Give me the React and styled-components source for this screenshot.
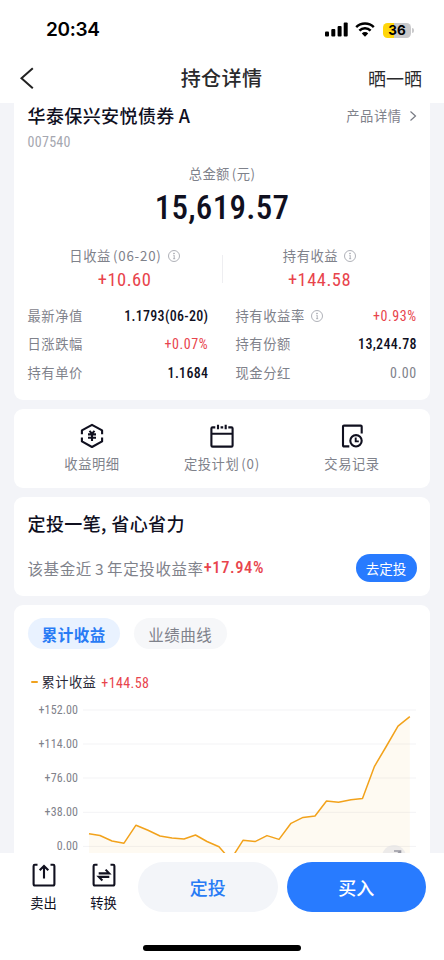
import React from "react"
import styled, { createGlobalStyle, css } from "styled-components"

// Data:
const leftStats = [
    { label: "最新净值", value: "1.1793(06-20)" },
    { label: "日涨跌幅", value: "+0.07%", tone: "up" },
    { label: "持有单价", value: "1.1684" },
]

const rightStats = [
    { label: "持有收益率", value: "+0.93%", tone: "up", info: true },
    { label: "持有份额", value: "13,244.78" },
    { label: "现金分红", value: "0.00", tone: "muted" },
]

const axisLabels = ["+152.00", "+114.00", "+76.00", "+38.00", "0.00"]

const profit = [
    [6, 133.8], [17, 135.5], [29, 141], [41, 143.2], [53, 125.2], [65, 130.3], [77, 136],
    [89, 138], [101, 139], [112.5, 135], [124, 141.5], [136, 146.7], [147.5, 160],
    [160, 140.3], [172, 141.6], [184, 135.6], [196, 139.4], [208, 123.3], [220, 117.4],
    [232, 116], [243.5, 101], [255.5, 102.3], [268, 99.8], [279.5, 98.4], [291.5, 66.3],
    [303.5, 46], [315, 26.2], [326.8, 16.6],
]

const InfoIcon = () => (
    <svg width="12" height="12" viewBox="0 0 12 12" fill="none" stroke="#9a9da6" strokeWidth="0.8">
        <circle cx="6" cy="6" r="5.5" />
        <path d="M5.4 5.2H6.2V8.6M5.2 8.7H7.2" />
        <circle cx="6" cy="3.3" r="0.4" fill="#9a9da6" />
    </svg>
)

const StatusIcons = () => (
    <svg width="88" height="18" viewBox="0 0 88 18">
        <rect x="0" y="10.5" width="4" height="5" rx="1" />
        <rect x="6.3" y="8" width="4" height="7.5" rx="1" />
        <rect x="12.6" y="5" width="4" height="10.5" rx="1" />
        <rect x="18.7" y="1.5" width="4" height="14" rx="1" />
        <g fill="none" stroke="#000" strokeWidth="2.5">
            <path d="M31.2 6.2a12.4 12.4 0 0 1 17.6 0" />
            <path d="M34.4 9.7a7.8 7.8 0 0 1 11.2 0" />
        </g>
        <path d="M40 15.7l-3.2-3.3a4.6 4.6 0 0 1 6.4 0z" />
    </svg>
)

const YenIcon = () => (
    <svg width="26" height="26" viewBox="0 0 26 26" fill="none" stroke="#10101f" strokeWidth="2.1">
        <path d="M2.9 11.3V7.4L13 1.9 23.1 7.4V11.3M2.9 14.4V18.4L13 24 23.1 18.4V14.4" strokeLinejoin="round" />
        <path d="M10.5 7.9L13 10.6 15.5 7.9M9 11.4H17M9 14.7H17M13 10.6V17.9" />
    </svg>
)

const CalendarIcon = () => (
    <svg width="26" height="26" viewBox="0 0 26 26" fill="none" stroke="#10101f" strokeWidth="2.1">
        <path d="M6.3 4.4H3.6Q2.4 4.4 2.4 5.6V22.4Q2.4 23.6 3.6 23.6H22.4Q23.6 23.6 23.6 22.4V5.6Q23.6 4.4 22.4 4.4H19.3M11.6 4.4H14.2M2.4 10.8H23.6" />
        <path d="M9 1.8V6.2M16.7 1.8V6.2" />
    </svg>
)

const RecordIcon = () => (
    <svg width="26" height="26" viewBox="0 0 26 26" fill="none" stroke="#10101f" strokeWidth="2.1">
        <path d="M10.3 23.4H5Q4 23.4 4 22.4V3.6Q4 2.6 5 2.6H21.7Q22.7 2.6 22.7 3.6V10.5" />
        <circle cx="17" cy="17.8" r="5.7" />
        <path d="M16.7 14.6V18.4H19.8" strokeWidth="1.9" />
    </svg>
)

const SellIcon = () => (
    <svg width="26" height="26" viewBox="0 0 26 26" fill="none" stroke="#10101f" strokeWidth="2.1">
        <path d="M6.5 2.7H3.8Q2.6 2.7 2.6 3.9V22Q2.6 23.5 4 23.5H22Q23.4 23.5 23.4 22V3.9Q23.4 2.7 22.2 2.7H19.5" />
        <path d="M13 16.5V4.2M8.7 8.2L13 3.9 17.3 8.2" />
    </svg>
)

const SwapIcon = () => (
    <svg width="26" height="26" viewBox="0 0 26 26" fill="none" stroke="#10101f" strokeWidth="2.1">
        <path d="M6.5 2.7H3.8Q2.6 2.7 2.6 3.9V22Q2.6 23.5 4 23.5H22Q23.4 23.5 23.4 22V3.9Q23.4 2.7 22.2 2.7H19.5" />
        <path d="M7.7 11.4H18.2L14.6 7.6M18.3 14.9H7.8L11.4 18.6" />
    </svg>
)

const StatColumn = ({ items }) => (
    <Column>
        {items.map((item) => (
            <StatRow key={item.label}>
                <Label>
                    {item.label}
                    {item.info && <InfoIcon />}
                </Label>
                <StatValue $tone={item.tone}>{item.value}</StatValue>
            </StatRow>
        ))}
    </Column>
)

const ProfitChart = () => {
    const line = profit.map((point) => point.join(",")).join(" ")
    return (
        <svg width="333" height="153" viewBox="0 0 333 153" fill="none">
            {[10, 44, 78, 112.3, 146.4].map((y) => (
                <path key={y} d={`M0 ${y}H333`} stroke="#f3f3f5" />
            ))}
            <polygon points={`6,170 ${line} 326.8,170`} fill="#f5a31a" fillOpacity="0.06" />
            <polyline points={line} stroke="#f2a21b" strokeWidth="1.5" strokeLinejoin="round" />
        </svg>
    )
}

const App = () => {
    return (
        <>
            <GlobalStyle />
            <Screen>
                <StatusBar>
                    <Clock>20:34</Clock>
                    <StatusRight>
                        <StatusIcons />
                        <Battery>36</Battery>
                    </StatusRight>
                </StatusBar>
                <NavBar>
                    <svg width="16" height="24" viewBox="0 0 16 24" fill="none" stroke="#222" strokeWidth="2">
                        <path d="M13.8 2.2L2.5 12.3 13.8 22.2" />
                    </svg>
                    <NavTitle>持仓详情</NavTitle>
                    <NavAction>晒一晒</NavAction>
                </NavBar>

                <Content>
                    <SummaryCard>
                        <FundHeader>
                            <FundName>华泰保兴安悦债券<span>A</span></FundName>
                            <DetailLink>
                                产品详情
                                <svg width="8" height="12" viewBox="0 0 8 12" fill="none" stroke="#777a83" strokeWidth="1.2">
                                    <path d="M1.5 1.5L6.5 6 1.5 10.5" />
                                </svg>
                            </DetailLink>
                        </FundHeader>
                        <FundCode>007540</FundCode>
                        <TotalLabel>总金额<span>(元)</span></TotalLabel>
                        <Total>15,619.57</Total>
                        <Earnings>
                            <Earning>
                                <Label>日收益<Latin>(06-20)</Latin><InfoIcon /></Label>
                                <EarningValue>+10.60</EarningValue>
                            </Earning>
                            <Divider />
                            <Earning>
                                <Label>持有收益<InfoIcon /></Label>
                                <EarningValue>+144.58</EarningValue>
                            </Earning>
                        </Earnings>
                        <Stats>
                            <StatColumn items={leftStats} />
                            <StatColumn items={rightStats} />
                        </Stats>
                    </SummaryCard>

                    <ActionCard>
                        <Action><YenIcon /><Label>收益明细</Label></Action>
                        <Action><CalendarIcon /><Label>定投计划<Latin>(0)</Latin></Label></Action>
                        <Action><RecordIcon /><Label>交易记录</Label></Action>
                    </ActionCard>

                    <PlanCard>
                        <PlanTitle>定投一笔, 省心省力</PlanTitle>
                        <PlanRow>
                            <PlanText>该基金近<i>3</i>年定投收益率<b>+17.94%</b></PlanText>
                            <PlanButton>去定投</PlanButton>
                        </PlanRow>
                    </PlanCard>

                    <ChartCard>
                        <Tabs>
                            <Tab $active>累计收益</Tab>
                            <Tab>业绩曲线</Tab>
                        </Tabs>
                        <Legend>
                            <Dash />
                            累计收益
                            <LegendValue>+144.58</LegendValue>
                        </Legend>
                        <ChartArea>
                            <Axis>
                                {axisLabels.map((label) => <span key={label}>{label}</span>)}
                            </Axis>
                            <ProfitChart />
                            <Expand>
                                <svg width="24" height="24" viewBox="0 0 24 24" fill="none" stroke="#9999a3" strokeWidth="1.6">
                                    <path d="M12 6H18.5V12M18 6.5L14 10.5" />
                                </svg>
                            </Expand>
                        </ChartArea>
                    </ChartCard>
                </Content>

                <Footer>
                    <FooterRow>
                        <FooterItem><SellIcon />卖出</FooterItem>
                        <FooterItem><SwapIcon />转换</FooterItem>
                        <FooterButton>定投</FooterButton>
                        <FooterButton $primary>买入</FooterButton>
                    </FooterRow>
                    <HomeIndicator />
                </Footer>
            </Screen>
        </>
    )
}

// Styling:
// Narrow figures, set a little apart
const digits = css`
    font-family: Roboto, "Noto Sans CJK SC", sans-serif;
    font-stretch: 84%;
`

const GlobalStyle = createGlobalStyle`
    * {
        box-sizing: border-box;
    }
    body {
        margin: 0;
        background: white;
        font-family: "Noto Sans CJK SC", sans-serif;
        color: #10101f;
    }
    svg {
        display: block;
        flex: none;
    }
    button {
        border: none;
        padding: 0;
        font-family: inherit;
    }
`

const Screen = styled.div`
    width: 444px;
    height: 960px;
    display: flex;
    flex-direction: column;
    overflow: hidden;
    white-space: nowrap;
`

const StatusBar = styled.div`
    height: 54px;
    padding: 6px 30px 0 46px;
    display: flex;
    align-items: center;
    justify-content: space-between;
`

const Clock = styled.div`
    font: 600 19px/24px Inter, sans-serif;
    letter-spacing: -0.3px;
    color: black;
`

const StatusRight = styled.div`
    display: flex;
    align-items: center;
    width: 89px;
`

const Battery = styled.div`
    position: relative;
    flex: none;
    width: 28px;
    height: 15px;
    margin-left: -30px;
    border-radius: 4.5px;
    background: linear-gradient(90deg, #ffd60a 38%, #c9c9cb 38%);
    font: 700 13.5px/15px Inter, sans-serif;
    text-align: center;
    color: black;

    &::after {
        content: "";
        position: absolute;
        left: 29px;
        top: 5px;
        width: 1.5px;
        height: 5px;
        border-radius: 0 2px 2px 0;
        background: #c9c9cb;
    }
`

const NavBar = styled.div`
    height: 49px;
    padding: 0 22px 1px 19px;
    display: grid;
    grid-template-columns: 1fr auto 1fr;
    align-items: center;
    color: #2a2a2c;
`

const NavTitle = styled.div`
    padding-left: 2px;
    font-size: 20px;
    line-height: 28px;
    letter-spacing: 0.4px;
    font-weight: 500;
`

const NavAction = styled.div`
    justify-self: end;
    font-size: 18px;
    line-height: 28px;
`

const Content = styled.div`
    height: 750px;
    flex: none;
    padding: 0 14px;
    background: #f3f4f8;
    overflow: hidden;
    display: flex;
    flex-direction: column;
    gap: 9px;
`

const Card = styled.div`
    flex: none;
    border-radius: 9px;
    background: white;
`

const SummaryCard = styled(Card)`
    height: 297px;
    border-radius: 0 0 9px 9px;
    padding: 0 13.5px;
`

const FundHeader = styled.div`
    height: 25px;
    display: flex;
    justify-content: space-between;
    align-items: center;
`

const FundName = styled.div`
    font-size: 18px;
    line-height: 25px;
    font-weight: 500;
    letter-spacing: 0.4px;

    span {
        margin-left: 4px;
    }
`

const DetailLink = styled.div`
    display: flex;
    align-items: center;
    gap: 7px;
    font-size: 13.3px;
    line-height: 20px;
    letter-spacing: 0.5px;
    color: #7f828b;
`

const FundCode = styled.div`
    ${digits}
    margin-top: 4px;
    font-size: 14px;
    line-height: 20px;
    letter-spacing: 0.3px;
    color: #a5a7b0;
`

const TotalLabel = styled.div`
    margin-top: 12px;
    text-align: center;
    font-size: 13.3px;
    line-height: 20px;
    letter-spacing: 0.4px;
    color: #7f828b;

    span {
        margin-left: 2px;
    }
`

const Total = styled.div`
    ${digits}
    margin-top: 2px;
    text-align: center;
    font-weight: 500;
    font-size: 33px;
    line-height: 44px;
    letter-spacing: 0.3px;
`

const Earnings = styled.div`
    margin-top: 16px;
    height: 46px;
    display: flex;
    align-items: center;
`

const Earning = styled.div`
    flex: 1;
    display: flex;
    flex-direction: column;
    align-items: center;
`

const Divider = styled.div`
    width: 1px;
    height: 28px;
    background: #eeeef1;
`

const Label = styled.div`
    display: flex;
    align-items: center;
    font-size: 13.3px;
    line-height: 20px;
    letter-spacing: 0.55px;
    color: #7f828b;

    svg {
        margin-left: 6px;
    }
`

const Latin = styled.span`
    margin-left: 2px;
    letter-spacing: 0.8px;
`

const EarningValue = styled.div`
    ${digits}
    margin-top: 2px;
    font-weight: 450;
    font-size: 18.5px;
    line-height: 24px;
    letter-spacing: 0.5px;
    color: #e8444c;
`

const Stats = styled.div`
    margin-top: 9.5px;
    display: grid;
    grid-template-columns: 180.5px 181px;
    justify-content: space-between;
`

const Column = styled.div`
    display: flex;
    flex-direction: column;
`

const StatRow = styled.div`
    height: 28.5px;
    display: flex;
    align-items: center;
    justify-content: space-between;
`

const tones = { up: "#e8444c", muted: "#7f828b" }

const StatValue = styled.div`
    ${digits}
    font-weight: ${({ $tone }) => ($tone ? 400 : 500)};
    font-size: 14px;
    line-height: 20px;
    letter-spacing: ${({ $tone }) => ($tone ? 0.6 : 0.3)}px;
    margin-right: -0.3px;
    color: ${({ $tone }) => tones[$tone] || "#10101f"};
`

const ActionCard = styled(Card)`
    height: 79px;
    padding: 14px 13px 0;
    display: grid;
    grid-template-columns: repeat(3, 1fr);
`

const Action = styled.div`
    display: flex;
    flex-direction: column;
    align-items: center;
    gap: 5px;

    svg {
        margin: 0;
    }
`

const PlanCard = styled(Card)`
    height: 99px;
    padding: 13px 13.5px 0;
`

const PlanTitle = styled.div`
    font-size: 18px;
    line-height: 26px;
    letter-spacing: 0.4px;
    font-weight: 500;
`

const PlanRow = styled.div`
    margin-top: 18px;
    height: 28px;
    display: flex;
    align-items: center;
    justify-content: space-between;
`

const PlanText = styled.div`
    display: flex;
    align-items: center;
    font-size: 15.5px;
    line-height: 24px;
    letter-spacing: 0.6px;
    color: #7f828b;
    margin-top: -1px;

    i {
        margin: 0 3px;
        font-style: normal;
    }
    b {
        ${digits}
        font-weight: 500;
        font-size: 16.5px;
        letter-spacing: 0.6px;
        padding-top: 1px;
        color: #e8444c;
    }
`

const PlanButton = styled.button`
    width: 61px;
    height: 28px;
    border-radius: 14px;
    background: #287bff;
    color: white;
    font-size: 13.5px;
    line-height: 26px;
`

const ChartCard = styled(Card)`
    height: 330px;
    padding: 13px 13.5px 0;
`

const Tabs = styled.div`
    display: flex;
    gap: 14px;
`

const Tab = styled.button`
    width: 92.5px;
    height: 31px;
    border-radius: 16px;
    background: ${({ $active }) => ($active ? "#e9f2ff" : "#f6f7f9")};
    color: ${({ $active }) => ($active ? "#287bf5" : "#7f828b")};
    font-size: 15.5px;
    font-weight: ${({ $active }) => ($active ? 700 : 400)};
    letter-spacing: 0.5px;
    line-height: 30px;
`

const Legend = styled.div`
    margin: 23px 0 0 3px;
    height: 20px;
    display: flex;
    align-items: center;
    font-size: 13.3px;
    line-height: 20px;
    letter-spacing: 0.4px;
    color: #2a2a38;
`

const Dash = styled.div`
    width: 7px;
    height: 2px;
    margin-right: 4px;
    border-radius: 1px;
    background: #f0a21f;
`

const LegendValue = styled.span`
    ${digits}
    margin: 1px 0 0 5px;
    font-size: 14px;
    letter-spacing: 0.4px;
    color: #e8444c;
`

const ChartArea = styled.div`
    position: relative;
    margin-top: 8px;
    display: flex;
    gap: 5px;
`

const Axis = styled.div`
    ${digits}
    width: 50.5px;
    display: flex;
    flex-direction: column;
    align-items: flex-end;
    font-size: 12px;
    line-height: 20px;
    letter-spacing: 0.1px;
    color: #7f828b;

    span {
        margin-bottom: 14.1px;
    }
`

const Expand = styled.div`
    position: absolute;
    left: 354px;
    top: 145px;
    width: 24px;
    height: 24px;
    border-radius: 50%;
    background: rgba(225, 225, 228, 0.6);
`

const Footer = styled.div`
    height: 107px;
    flex: none;
    display: flex;
    flex-direction: column;
    align-items: center;
    background: white;
`

const FooterRow = styled.div`
    width: 100%;
    height: 92px;
    padding: 9px 18px 0 13.5px;
    display: grid;
    grid-template-columns: 60px 60px 139.5px 139.5px;
    justify-content: start;
    align-items: start;

    button {
        margin-left: 4.5px;
    }
    button:last-child {
        margin-left: 13.5px;
    }
`

const FooterItem = styled.div`
    display: flex;
    flex-direction: column;
    align-items: center;
    gap: 5px;
    font-size: 13.3px;
    line-height: 20px;
`

const FooterButton = styled.button`
    width: 139.5px;
    height: 50px;
    border-radius: 25px;
    background: ${({ $primary }) => ($primary ? "#287bff" : "#f3f5f9")};
    color: ${({ $primary }) => ($primary ? "white" : "#287bf5")};
    font-size: 18px;
    font-weight: 500;
    line-height: 49px;
`

const HomeIndicator = styled.div`
    width: 158px;
    height: 6px;
    border-radius: 3px;
    background: black;
`

export default App
